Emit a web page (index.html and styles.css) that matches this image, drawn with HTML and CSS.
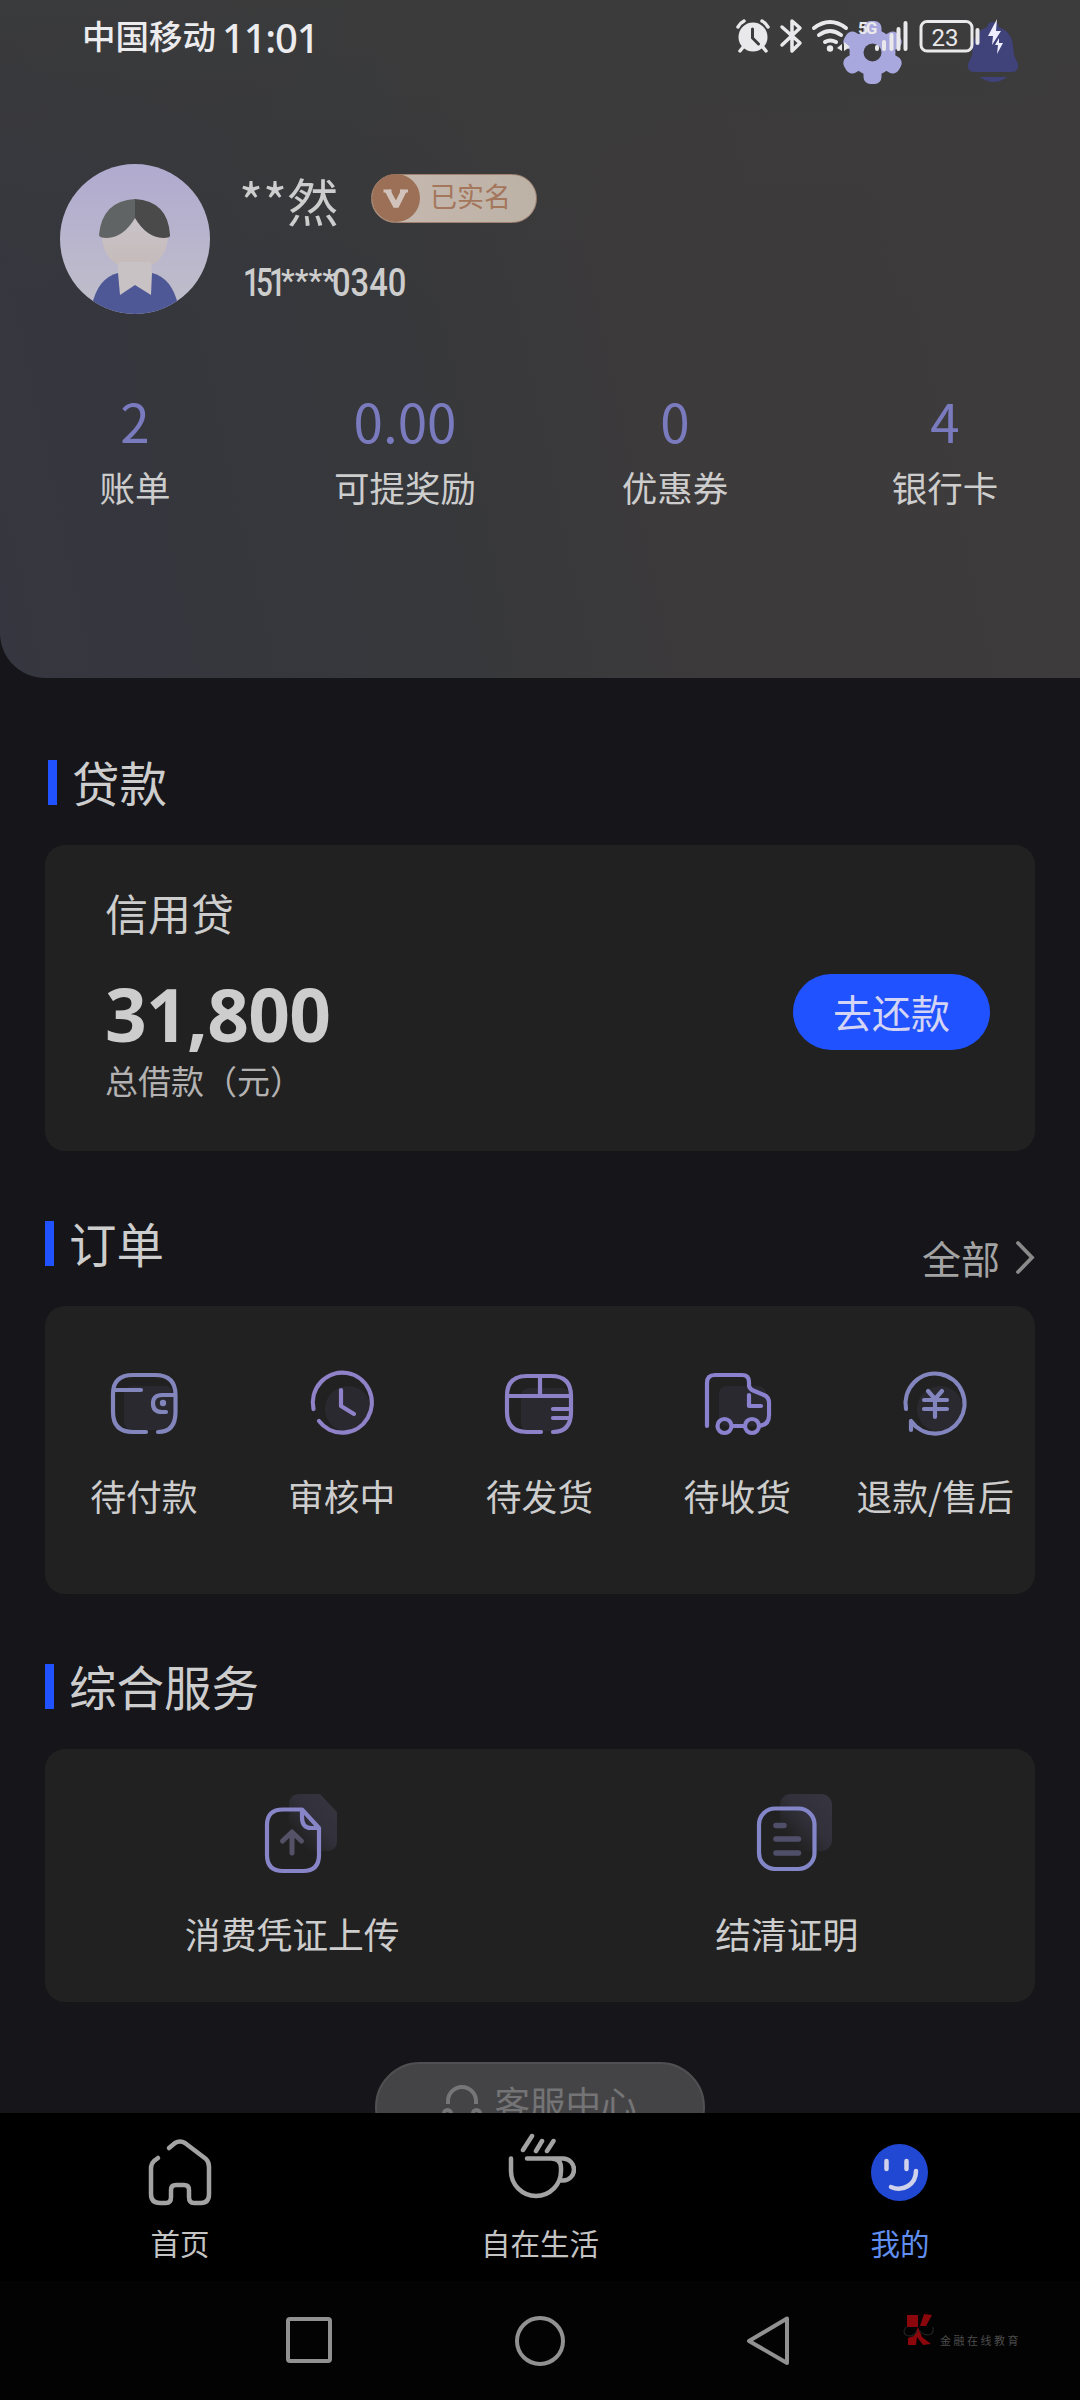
FILE: index.html
```html
<!DOCTYPE html>
<html lang="zh-CN">
<head>
<meta charset="utf-8">
<title>我的</title>
<link rel="stylesheet" href="styles.css">
</head>
<body>
<header class="hero">
  <div class="status">
    <div class="carrier">中国移动</div>
    <div class="clock">11:01</div>
    <svg class="status-icons" viewBox="720 0 320 96" width="320" height="96">
      <g fill="#a9a8de">
        <circle cx="872.500" cy="52.500" r="23"/>
        <rect x="863.500" y="21" width="18" height="63" rx="7"/>
        <rect x="863.500" y="21" width="18" height="63" rx="7" transform="rotate(60 872.500 52.500)"/>
        <rect x="863.500" y="21" width="18" height="63" rx="7" transform="rotate(120 872.500 52.500)"/>
      </g>
      <circle cx="872.500" cy="52.500" r="9" fill="#3b3b3d"/>
      <path fill="#40427a" d="M993 22q5 0 6 5 13 5 14 19l1 9 4 9q1 8-7 8h-36q-8 0-7-8l4-9 1-9q1-14 14-19 1-5 6-5ZM980 77h27q-13 10-27 0Z"/>
      <g fill="#e9e9eb">
        <circle cx="753" cy="37" r="14.500"/>
        <path d="M744 46l-4 5M762 46l4 5M738 27q2-4 6-6M768 27q-2-4-6-6" stroke="#e9e9eb" stroke-width="3.500" stroke-linecap="round" fill="none"/>
        <path d="M752.500 29v9l6 6" stroke="#3b3b3d" stroke-width="3" stroke-linecap="round" fill="none"/>
      </g>
      <g fill="none" stroke="#e9e9eb" stroke-width="3.500" stroke-linecap="round" stroke-linejoin="round">
        <path d="M782 27l18 16-8 8V21l8 7-18 17"/>
        <path stroke-width="4" d="M814 28q16-12 32 0M819 35q11-8 22 0M825 42q5-3 11 0"/>
      </g>
      <circle cx="830" cy="48.500" r="3.200" fill="#e9e9eb"/>
      <path fill="#e9e9eb" d="M842 44v7l-5-3ZM844 42l6 5-6 4Z"/>
      <text x="858" y="34" class="net">5G</text>
      <path d="M877 47v2M884 42v7M891.500 35v14M898.500 29v20M905.500 23v26" stroke="#e9e9eb" stroke-width="4" stroke-linecap="round"/>
      <rect x="921" y="21.500" width="51" height="29.500" rx="6" fill="none" stroke="#e9e9eb" stroke-width="3"/>
      <path d="M977.500 30v13" stroke="#e9e9eb" stroke-width="4" stroke-linecap="round"/>
      <text x="945" y="45.500" class="charge" text-anchor="middle">23</text>
      <path fill="#eeeeff" d="M997 19L988 36H993L992 45L1001 31H996ZM999 38L995 45H998L997 54L1003 43H999Z"/>
    </svg>
  </div>
  <div class="profile">
    <svg class="avatar" viewBox="60 164 150 150" width="150" height="150">
      <defs>
        <linearGradient id="sky" x2="0" y2="1"><stop offset="0" stop-color="#b0aacf"/><stop offset=".7" stop-color="#bcb9cc"/><stop offset="1" stop-color="#c0bfc8"/></linearGradient>
        <linearGradient id="skin" x2="0" y2="1"><stop offset="0" stop-color="#cac5cc"/><stop offset="1" stop-color="#c5bab9"/></linearGradient>
        <clipPath id="disc"><circle cx="135" cy="239" r="75"/></clipPath>
      </defs>
      <g clip-path="url(#disc)">
        <rect x="60" y="164" width="150" height="150" fill="url(#sky)"/>
        <circle cx="135" cy="237" r="33" fill="url(#skin)"/>
        <path fill="#4f5896" d="M118 273q-20 5-26 32v15h86v-15q-6-27-26-32Z"/>
        <path fill="#c8c2c5" d="M118 262h33l1 11-1 22-16-10-15 10-2-22Z"/>
        <path fill="#616464" d="M135 199V218Q124 237 107 238Q99 238 99 235Q102 201 135 199Z"/>
        <path fill="#4a4a4b" d="M135 199V218Q146 237 163 238Q171 238 170 235Q168 201 135 199Z"/>
      </g>
    </svg>
    <div class="who">
      <div class="name-row">
        <span class="name">**然</span>
        <span class="badge">
          <svg viewBox="0 0 48 48" width="48" height="48"><circle cx="24" cy="24" r="24" fill="#9c7056"/><path d="M11.500 17h8M28 17h8" stroke="#d1c3bc" stroke-width="3"/><path d="M15.500 16.500l8.500 16 8-16" fill="none" stroke="#d1c3bc" stroke-width="5.500" stroke-linejoin="bevel"/></svg>
          <span>已实名</span>
        </span>
      </div>
      <div class="phone"><span class="pre">151</span><span class="mask">****</span><span class="tail">0340</span></div>
    </div>
  </div>
  <div class="stats">
    <div class="stat"><b>2</b><span>账单</span></div>
    <div class="stat"><b>0.00</b><span>可提奖励</span></div>
    <div class="stat"><b>0</b><span>优惠券</span></div>
    <div class="stat"><b>4</b><span>银行卡</span></div>
  </div>
</header>

<main class="content">
  <section class="loan-section">
    <h2 class="title inset">贷款</h2>
    <div class="card loan">
      <div class="loan-info">
        <div class="loan-name">信用贷</div>
        <div class="amount">31,800</div>
        <div class="note">总借款（元）</div>
      </div>
      <div class="repay">去还款</div>
    </div>
  </section>

  <section class="order-section">
    <div class="title-row">
      <h2 class="title">订单</h2>
      <div class="all">全部<svg viewBox="0 0 24 36" width="24" height="36"><path d="M5 4l14 14.500L5 33" fill="none" stroke="#8a8a8a" stroke-width="3.800" stroke-linecap="round"/></svg></div>
    </div>
    <div class="card orders">
      <div class="item">
        <svg class="line" stroke="#8385bd" viewBox="108 1367 72 72" width="72" height="72"><rect x="124" y="1385" width="49" height="44" rx="8" class="shade"/><path d="M146 1431H133Q113 1431 113 1411V1393Q113 1374 133 1374H155Q175.500 1374 175.500 1394V1411Q175.500 1431 158 1431M114 1389H141M174 1394H162Q153 1394 153 1402.500T162 1411H166"/><circle cx="163" cy="1402" r="3.200" fill="#8385bd" stroke="none"/></svg>
        <span>待付款</span>
      </div>
      <div class="item">
        <svg class="line" stroke="#8f82c8" viewBox="306 1367 72 72" width="72" height="72"><circle cx="348" cy="1408" r="23" class="shade"/><path d="M313.500 1408A29.500 30 0 1 1 319 1420M341 1389V1405L354 1413"/></svg>
        <span>审核中</span>
      </div>
      <div class="item">
        <svg class="line" stroke="#8d82c8" viewBox="504 1367 72 72" width="72" height="72"><rect x="522" y="1387" width="49" height="43" rx="8" class="shade"/><path d="M542 1431H528Q508 1431 508 1411V1395Q508 1375 528 1375H552Q572 1375 572 1395V1411Q572 1431 554 1431M509 1395H571M541 1376V1394M554 1408H571M554 1417H571"/></svg>
        <span>待发货</span>
      </div>
      <div class="item">
        <svg class="line" stroke="#8a82cf" viewBox="702 1367 72 72" width="72" height="72"><rect x="720" y="1385" width="47" height="40" rx="8" class="shade"/><path d="M708 1425V1382Q708 1374 716 1374H743Q750 1374 750 1381V1384Q750 1387 753 1389L765 1394Q770 1396 770 1402V1414Q770 1424 761 1424.500M734 1425H745M750 1394V1405H762"/><circle cx="725.500" cy="1425" r="7"/><circle cx="753" cy="1425" r="7"/></svg>
        <span>待收货</span>
      </div>
      <div class="item">
        <svg class="line" stroke="#8285be" viewBox="900 1367 72 72" width="72" height="72"><circle cx="941" cy="1408" r="23" class="shade"/><path d="M907 1408A29.500 30 0 1 1 912 1420V1429M929 1390L936 1398 943 1390M925 1399H948M925 1408H948M936 1399V1416"/></svg>
        <span>退款/售后</span>
      </div>
    </div>
  </section>

  <section class="service-section">
    <h2 class="title">综合服务</h2>
    <div class="card services">
      <div class="item">
        <svg class="line" stroke="#8784c8" viewBox="242 1792 100 84" width="100" height="84"><defs><linearGradient id="fade" x1="1" y1="0" x2="0" y2="1"><stop offset="0" stop-color="#373640"/><stop offset=".45" stop-color="#32313b"/><stop offset=".8" stop-color="#212121"/></linearGradient></defs><path stroke="none" fill="url(#fade)" d="M300 1794H320L337 1812V1840Q337 1851 327 1851H289V1805Q289 1794 300 1794Z"/><path d="M302 1809.500H283Q267 1809.500 267 1825V1855Q267 1871 283 1871H303Q319 1871 319 1855V1828ZM302 1810V1817Q302 1828 311 1828H319"/><path stroke="#555167" stroke-width="5" d="M292 1853V1832M282.500 1841L292 1832 301.500 1841"/></svg>
        <span>消费凭证上传</span>
      </div>
      <div class="item">
        <svg class="line" stroke="#8386c8" viewBox="737 1792 100 84" width="100" height="84"><rect x="780" y="1794" width="52" height="57" rx="11" stroke="none" fill="url(#fade)"/><rect x="759" y="1808.500" width="55.500" height="60.500" rx="16"/><path stroke="#504f6a" stroke-width="5.500" d="M776 1825.500H784M776 1839H798.500M776 1853H798.500"/></svg>
        <span>结清证明</span>
      </div>
    </div>
  </section>

  <div class="help">
    <svg viewBox="440 2083 46 46" width="46" height="46" fill="none" stroke="#767678" stroke-width="4"><path d="M448 2104V2101A14 14 0 0 1 476 2101V2104"/><rect x="444" y="2110" width="7" height="14" rx="3.500"/><rect x="473" y="2110" width="7" height="14" rx="3.500"/></svg>
    <span>客服中心</span>
  </div>
</main>

<nav class="tabs">
  <div class="tab">
    <svg viewBox="144 2130 72 80" width="72" height="80" fill="none" stroke="#a3a3a3" stroke-width="4.500" stroke-linecap="round" stroke-linejoin="round"><path d="M158 2158L154 2161Q151 2164 151 2168V2194Q151 2203 160 2203H166Q171 2203 171 2197V2190Q171 2185 176 2185H184Q189 2185 189 2190V2197Q189 2203 194 2203H201Q209 2203 209 2194V2167Q209 2162 206 2159L185 2143Q180 2140 175 2143L169 2148"/></svg>
    <span>首页</span>
  </div>
  <div class="tab">
    <svg viewBox="504 2130 72 80" width="72" height="80" fill="none" stroke="#a3a3a3" stroke-width="4.500" stroke-linecap="round" stroke-linejoin="round"><path d="M511 2158.500V2171A25 25 0 0 0 561 2171V2168Q561 2158.500 551 2158.500H527M553 2158.500H563A11 11 0 0 1 563 2180.500H561M523 2150L532 2136M536 2151L542 2141M547 2151L553.500 2141"/></svg>
    <span>自在生活</span>
  </div>
  <div class="tab active">
    <svg viewBox="864 2130 72 80" width="72" height="80" fill="none" stroke="#cfd2ea" stroke-width="4.500" stroke-linecap="round"><circle cx="899.500" cy="2172.500" r="28.500" fill="#2148d3" stroke="none"/><path d="M886.500 2161V2169M906.500 2161V2169M891 2187Q900 2191 908 2186 916 2181 916 2171"/></svg>
    <span>我的</span>
  </div>
</nav>

<footer class="system">
  <svg viewBox="0 0 50 54" width="50" height="54"><rect x="4" y="5" width="42" height="42" rx="2" fill="none" stroke="#919191" stroke-width="4"/></svg>
  <svg viewBox="0 0 54 54" width="54" height="54"><circle cx="27" cy="27" r="23" fill="none" stroke="#919191" stroke-width="4"/></svg>
  <svg viewBox="0 0 50 54" width="50" height="54"><path d="M43 4.500V49L5 27Z" fill="none" stroke="#919191" stroke-width="4" stroke-linejoin="round"/></svg>
  <div class="brand">
    <svg viewBox="902 2312 32 36" width="32" height="36"><path fill="#8b070b" d="M906 2315h11v12h-11ZM923 2314l8 1-6 11h-6ZM907 2345v-7l6-2 4-9 4 10 9 7-8 1-6-8-1 8Z"/><path d="M905 2327q-4 5 0 8 7 3 11-4M932 2327q1 5-2 7-7 3-12-4" fill="none" stroke="#222" stroke-width="1.200"/></svg>
    <span>金融在线教育</span>
  </div>
</footer>
</body>
</html>
```
FILE: styles.css
```css
* { box-sizing: border-box; }

body {
  margin: 0;
  width: 1080px;
  height: 2400px;
  overflow: hidden;
  display: flex;
  flex-direction: column;
  background: #15151a;
  color: #cdcdcd;
  font-family: "Noto Sans CJK SC", sans-serif;
}

svg { display: block; flex: none; }

.hero {
  height: 678px;
  flex: none;
  border-bottom-left-radius: 45px;
  background:
    linear-gradient(to bottom, rgba(60, 60, 60, .7), rgba(60, 60, 60, 0) 45%),
    linear-gradient(78deg, #35363f 0%, #37383b 38%, #3c3a3b 58%, #3e3b3c 100%);
}

/* system status bar */
.status {
  height: 96px;
  display: flex;
  padding-left: 82px;
  color: #ececee;
}
.carrier { font-size: 33.500px; font-weight: 500; line-height: 70px; }
.clock { margin-left: 6px; font: 500 40px/76px "Noto Sans", sans-serif; letter-spacing: -1.200px; }
.status-icons { margin-left: auto; margin-right: 40px; }
.net { font: bold 17px Roboto, sans-serif; fill: #e9e9eb; letter-spacing: -2px; }
.charge { font: 24px Roboto, sans-serif; fill: #e9e9eb; }

.profile { display: flex; padding: 68px 0 0 60px; }
.who { margin-left: 29px; padding-top: 3px; }
.name-row { display: flex; align-items: center; height: 66px; }
.name { width: 98px; font-size: 51.500px; line-height: 66px; white-space: nowrap; }
.badge {
  display: flex;
  align-items: center;
  width: 166px;
  height: 49px;
  margin: -4px 0 0 34px;
  border: 1px solid #a08270;
  border-radius: 25px;
  background: linear-gradient(to right, #c6b9b0, #bdb2a6);
  color: #a4765c;
  font-size: 27px;
  line-height: 44px;
}
.badge span { margin: -4px 0 0 10px; }
.phone {
  display: flex;
  margin: 20px 0 0 4px;
  font: 500 39px/60px Roboto, sans-serif;
}
.phone span { transform-origin: left; }
.pre { width: 38px; letter-spacing: -5px; transform: scaleX(.76); }
.mask { width: 51px; font-size: 31px; line-height: 56px; }
.tail { transform: scaleX(.84); }

.stats { display: grid; grid-template-columns: repeat(4, 1fr); padding-top: 70px; }
.stat { display: flex; flex-direction: column; align-items: center; }
.stat b { font-size: 53px; line-height: 72px; font-weight: 400; color: #7a7abf; }
.stat span { font-size: 35.500px; line-height: 50px; margin-top: 6px; }

.content { height: 1435px; flex: none; overflow: hidden; padding: 0 45px; }

.title {
  display: flex;
  align-items: center;
  height: 46px;
  margin: 0;
  font-size: 47.500px;
  line-height: 46px;
  font-weight: 400;
}
.title::before { content: ""; width: 9px; height: 45px; margin-right: 15px; background: #2152ff; }
.title.inset { padding-left: 3px; }
.card { background: #212121; border-radius: 20px; }

.loan-section { padding-top: 81px; }
.loan {
  display: flex;
  justify-content: space-between;
  height: 306px;
  margin-top: 40px;
  padding: 0 45px 0 60px;
}
.loan-name { font-size: 43px; line-height: 60px; margin-top: 37px; }
.amount { font: 700 73px/84px "Noto Sans", sans-serif; letter-spacing: -.700px; margin: 30px 0 2px 0; }
.note { font-size: 33px; line-height: 46px; margin-top: -1px; color: #b3b1b1; }
.repay {
  width: 197px;
  height: 76px;
  margin-top: 129px;
  border-radius: 38px;
  background: #2152ff;
  color: #d4d4f4;
  font-size: 39px;
  line-height: 74px;
  text-align: center;
}

.order-section { padding-top: 69px; }
.title-row { display: flex; justify-content: space-between; height: 46px; }
.all { display: flex; align-items: center; height: 46px; margin-top: 14px; margin-right: -2px; font-size: 39px; line-height: 46px; color: #a3a3a3; }
.all svg { margin-left: 13px; }
.orders { display: grid; grid-template-columns: repeat(5, 1fr); height: 288px; margin-top: 40px; padding: 62px 1px 0 0; }
.item { display: flex; flex-direction: column; align-items: center; font-size: 35.800px; line-height: 50px; white-space: nowrap; }
.item span { margin-top: 30px; }
.line { fill: none; stroke-width: 4.200px; stroke-linecap: round; stroke-linejoin: round; }
.shade { fill: #2a292f; stroke: none; }

.service-section { padding-top: 69px; }
.services { display: grid; grid-template-columns: repeat(2, 1fr); height: 253px; margin-top: 40px; padding: 43px 1px 0 0; }
.services .item span { margin-top: 32px; }

.help {
  display: flex;
  justify-content: center;
  width: 330px;
  height: 90px;
  margin: 60px auto 0;
  padding: 19px 3px 0 0;
  border: 2px solid #505052;
  border-radius: 45px;
  background: #444446;
  color: #747476;
  font-size: 35.500px;
  line-height: 38px;
}
.help span { margin-left: 8px; }

/* bottom navigation */
.tabs { display: grid; grid-template-columns: repeat(3, 1fr); height: 168px; flex: none; padding-top: 17px; background: #000; }
.tab { display: flex; flex-direction: column; align-items: center; font-size: 29.500px; line-height: 40px; color: #c4c4c4; }
.tab span { margin-top: 12px; }
.active { color: #608ff0; }

.system { display: flex; height: 119px; padding-top: 33px; background: #030303; padding-left: 284px; }
.system > svg + svg { margin-left: 179px; }
.system > svg:nth-child(3) { margin-left: 177px; }
.brand { display: flex; margin-left: 109px; margin-top: -2px; }
.brand span { margin-left: 5px; margin-top: 19px; font-size: 11px; line-height: 18px; letter-spacing: 2.500px; color: #4c4c4c; }
```
